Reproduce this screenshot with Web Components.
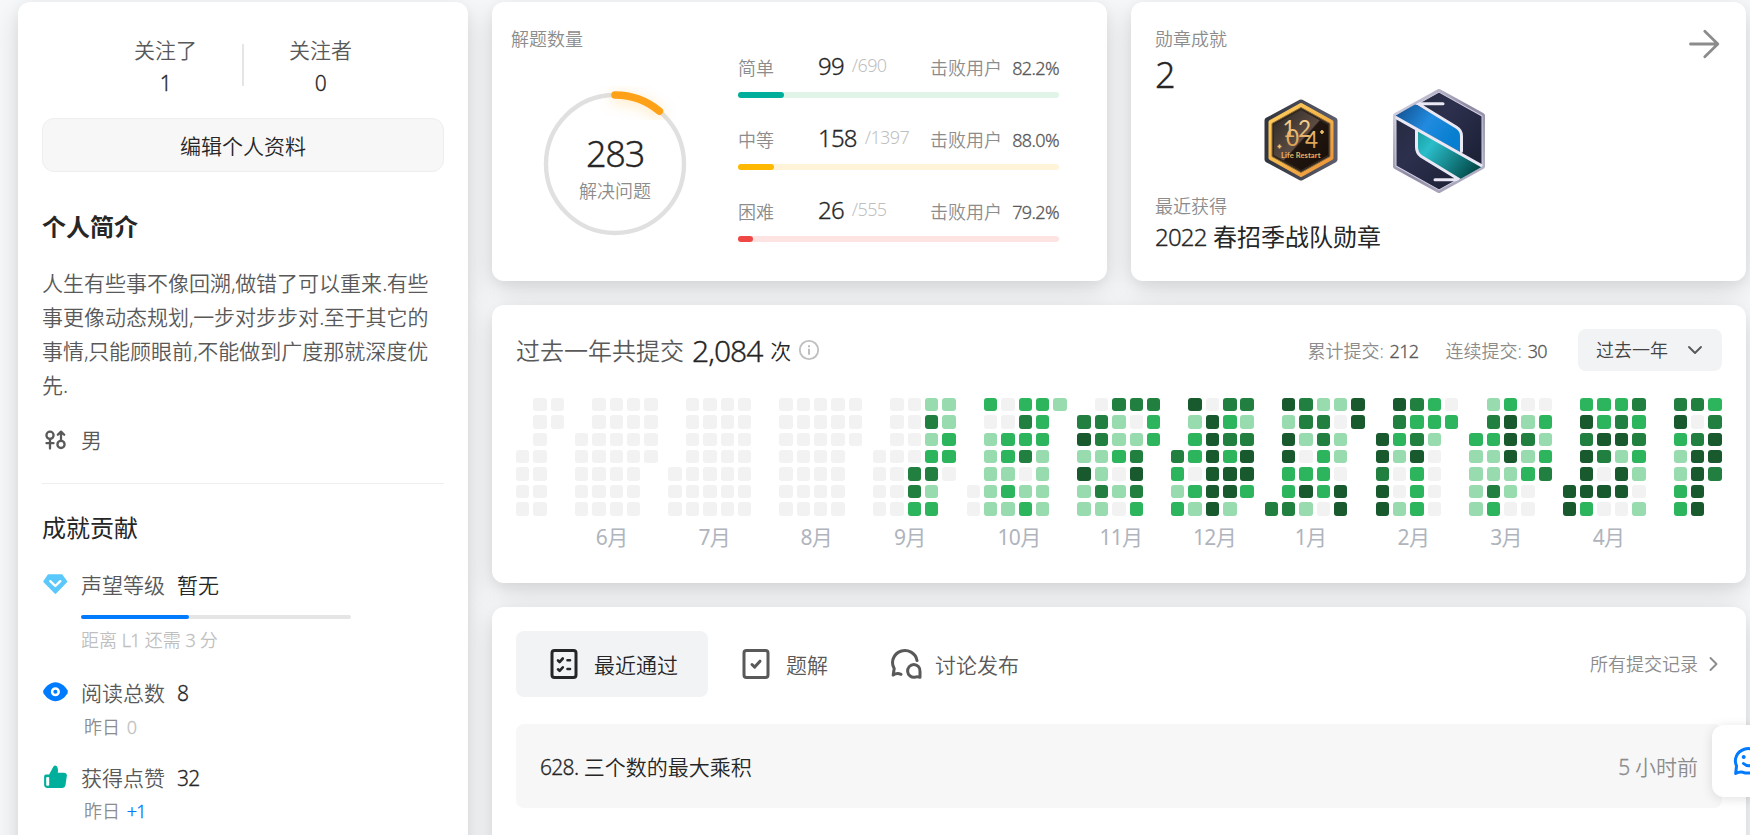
<!DOCTYPE html>
<html lang="zh-CN">
<head>
<meta charset="utf-8">
<title>个人主页</title>
<style>
html,body{margin:0;height:835px;overflow:hidden}
body{background:#f7f8fa;font-family:"Noto Sans","Noto Sans CJK SC",sans-serif;font-weight:350;color:#262626;width:1750px}
</style>
</head>
<body>
<profile-page></profile-page>
<script>
const define=(name,css,html,init)=>customElements.define(name,class extends HTMLElement{
  constructor(){
    super();
    const t=document.createElement('template');
    t.innerHTML=`<style>*{box-sizing:border-box}.n{letter-spacing:-.033em;font-weight:350;-webkit-text-stroke:.3px}svg{display:block;flex:none}${css}</style>${html}`;
    this.attachShadow({mode:'open'}).append(t.content.cloneNode(true));
  }
  connectedCallback(){ if(init) init(this,this.shadowRoot); }
});

define('surface-card',
`:host{display:block;background:#fff;border-radius:12px;box-shadow:0 9px 30px rgba(0,0,0,.13),0 4px 12px rgba(0,0,0,.05)}`,
`<slot></slot>`);

define('follow-stat',
`:host{display:block;text-align:center;font-size:21px;width:63px}
.l{line-height:34px;color:#595959}.v{line-height:32px}`,
`<div class="l"><slot></slot></div><div class="v n"><slot name="v"></slot></div>`);

define('contrib-item',
`:host{display:grid;grid-template-columns:39px 1fr;font-size:21px;line-height:34px}
.i{padding-top:var(--it,4px)}
.h{display:flex;color:#595959;line-height:32px;padding-bottom:2px}.h b{font-weight:350;color:#262626;margin-left:12px}
.s{font-size:18px;line-height:30px}`,
`<div class="i"><slot name="icon"></slot></div><div><div class="h"><slot name="label"></slot><b class="b"><slot name="value"></slot></b></div><div class="s"><slot></slot></div></div>`);

define('profile-side',
`:host{display:block;padding:31px 24px 0}
.f{display:flex;justify-content:center;gap:45px}.f i{width:2px;height:42px;background:#e5e5e5;margin-top:11px}
.btn{margin-top:19px;height:54px;border:1px solid #eee;background:#f7f7f7;border-radius:12px;text-align:center;font-size:21px;line-height:54px}
h3{margin:37px 0 0;font-size:24px;line-height:36px;font-weight:700}
p{margin:21px 0 0;font-size:21px;line-height:34px;color:#595959;white-space:nowrap}p span{letter-spacing:-.03em}
.g{display:flex;margin-top:22px;font-size:21px;line-height:33px;height:34px;color:#595959}.g svg{margin:5px 13px 0 2px}
hr{border:0;height:1px;background:#eee;margin:25px 0 0}
h4{margin:26px 0 0;font-size:24px;line-height:36px;font-weight:400}
.bar{width:270px;height:4px;border-radius:2px;background:#e5e5e5;margin-top:12px}.bar i{display:block;width:108px;height:4px;border-radius:2px;background:#007aff}
.sub{display:block;color:#bfbfbf;margin-top:6px}.y{padding-left:3px;color:#8c8c8c}.y em{font-style:normal;color:#bfbfbf;margin-left:2px}.y em.p{color:#007aff}`,
`<div class="f"><follow-stat>关注了<span slot="v">1</span></follow-stat><i></i><follow-stat>关注者<span slot="v">0</span></follow-stat></div>
<div class="btn">编辑个人资料</div>
<h3>个人简介</h3>
<p>人生有些事不像回溯<span>,</span>做错了可以重来<span>.</span>有些<br>事更像动态规划<span>,</span>一步对步步对<span>.</span>至于其它的<br>事情<span>,</span>只能顾眼前<span>,</span>不能做到广度那就深度优<br>先<span>.</span></p>
<div class="g"><svg width="24" height="24" viewBox="0 0 24 24" fill="none" stroke="#595959" stroke-width="2.300" stroke-linecap="round" stroke-linejoin="round"><circle cx="6" cy="6.300" r="3.600"/><path d="M6 10.500v9M2.500 14.200h7M17 11V3.200M13.800 5.800L17 2.600l3.200 3.200"/><circle cx="17" cy="15.400" r="3.600"/></svg>男</div>
<hr>
<h4>成就贡献</h4>
<contrib-item style="margin-top:23px;--it:5px"><svg slot="icon" width="26" height="21" viewBox="0 0 26 21"><path d="M6.500 1.200h13L24.300 7.500 13.400 18.900 2.300 7.500z" fill="#5ac8fa" stroke="#5ac8fa" stroke-width="2" stroke-linejoin="round"/><path d="M8.300 7.200l5 4.800 5-4.800" fill="none" stroke="#fff" stroke-width="2.400" stroke-linecap="round" stroke-linejoin="round"/></svg><span slot="label">声望等级</span><span slot="value">暂无</span><div class="bar"><i></i></div><span class="sub">距离 <span class="n">L1</span> 还需 <span class="n">3</span> 分</span></contrib-item>
<contrib-item style="margin-top:22px;--it:5px"><svg slot="icon" width="27" height="20" viewBox="0 0 27 20"><path d="M1.500 8.300C4 4 8.500 .3 13.500.3S23 4 25.500 8.300Q26.200 9.700 25.500 11.200C23 15.500 18.500 19.200 13.500 19.200S4 15.500 1.500 11.200Q.8 9.700 1.500 8.300z" fill="#007aff"/><circle cx="13.400" cy="9.700" r="3.300" fill="none" stroke="#fff" stroke-width="2.500"/></svg><span slot="label">阅读总数</span><span slot="value" class="n">8</span><div class="y" style="padding-top:1px">昨日 <em class="n">0</em></div></contrib-item>
<contrib-item style="margin-top:20px;--it:3px"><svg slot="icon" width="27" height="24" viewBox="0 0 27 24"><path d="M3.900 9.500h3.300L11 2.200Q12.200-.6 14.600 1 16.500 3 15.800 7.700h6.500Q25.200 8 24.900 10.600L23.400 20.500Q22.900 22.900 20.500 22.900H5.500Q2.100 22.900 2.100 19.500V11.500Q2.100 9.500 3.900 9.500z" fill="#00af9b"/><rect x="4.200" y="12" width="3" height="8.800" rx="1" fill="#fff"/></svg><span slot="label">获得点赞</span><span slot="value" class="n">32</span><div class="y">昨日 <em class="n p">+1</em></div></contrib-item>`);

define('level-row',
`:host{display:block;width:321px;height:72px;font-size:18px}
.r{display:flex;line-height:30px;height:39px;color:#8c8c8c}.l{width:80px}
.c{display:flex;width:112px}.c b{font-size:24px;line-height:26px;font-weight:350;color:#262626}.c span{line-height:25px;color:#bfbfbf;margin-left:8px;-webkit-text-stroke:0}
.p{margin-left:auto;color:#595959}
.bar{height:6px;border-radius:3px;background:var(--b)}.bar i{display:block;height:6px;border-radius:3px;background:var(--c);width:var(--w)}`,
`<div class="r"><span class="l"><slot name="l"></slot></span><span class="c"><b class="n"><slot name="c"></slot></b><span class="n"><slot name="t"></slot></span></span>击败用户<span class="p n"><slot name="p"></slot></span></div><div class="bar"><i></i></div>`);

define('solved-card',
`:host{display:grid;column-gap:52px;padding:22px 48px 0 19px;grid-template-columns:175px 321px;height:279px}
.l{font-size:18px;line-height:30px;color:#8c8c8c}
.ring{display:grid;width:160px;height:160px;margin:30px 0 0 24px;text-align:center}
.ring svg,.ring div{grid-area:1/1}.ring .v{padding-top:46px;font-size:36px;line-height:48px;color:#262626}.ring .t{font-size:18px;line-height:27px}
.rows{padding-top:29px}`,
`<div class="l"><span>解题数量</span>
<div class="ring"><svg width="160" height="160" viewBox="0 0 160 160" fill="none"><defs><filter id="g" x="-50%" y="-50%" width="200%" height="200%"><feDropShadow dx="0" dy="3" stdDeviation="7" flood-color="#ffa116" flood-opacity=".3"/></filter></defs><circle cx="80" cy="80" r="69" stroke="#e0e0e0" stroke-width="4.400"/><path d="M80 11A69 69 0 0 1 124.400 27.200" stroke="#ffa116" stroke-width="7.500" stroke-linecap="round" filter="url(#g)"/></svg><div><div class="v n">283</div><div class="t">解决问题</div></div></div></div>
<div class="rows">
<level-row style="--c:#00af9b;--b:#e0f4e7;--w:46px"><span slot="l">简单</span><span slot="c">99</span><span slot="t">/690</span><span slot="p">82.2%</span></level-row>
<level-row style="--c:#ffb800;--b:#fff4d9;--w:36px"><span slot="l">中等</span><span slot="c">158</span><span slot="t">/1397</span><span slot="p">88.0%</span></level-row>
<level-row style="--c:#ef4743;--b:#fde4e3;--w:15px"><span slot="l">困难</span><span slot="c">26</span><span slot="t">/555</span><span slot="p">79.2%</span></level-row>
</div>`);

define('medal-card',
`:host{display:block;height:279px;padding:22px 24px 0;color:#8c8c8c;font-size:18px;line-height:30px}
.top{display:flex;justify-content:space-between;height:30px;line-height:30px}.top svg{margin:4px 2px 0}
.num{font-size:36px;line-height:42px;height:35px;color:#262626}
.m{display:flex;height:104px;padding-left:109px;gap:54px;align-items:center}
.name{font-size:24px;line-height:34px;color:#262626;font-weight:400;margin-top:-1px}`,
`<div class="top"><span>勋章成就</span><svg width="32" height="32" viewBox="0 0 32 32" fill="none" stroke="#8c8c8c" stroke-width="2.800" stroke-linecap="round" stroke-linejoin="round"><path d="M2.500 16h27M16.800 3.300L29.800 16 16.800 28.700"/></svg></div>
<div class="num n">2</div>
<div class="m">
<svg style="margin-bottom:3px" width="74" height="82" viewBox="0 0 74 82"><defs>
<linearGradient id="a" x1="0" y1="0" x2="1" y2="1"><stop offset="0" stop-color="#ffce5c"/><stop offset=".5" stop-color="#f4b54a"/><stop offset="1" stop-color="#ee8f35"/></linearGradient>
<linearGradient id="b" x1="0" y1="0" x2="1" y2="1"><stop offset="0" stop-color="#2b2724"/><stop offset=".5" stop-color="#5c4c43"/><stop offset=".52" stop-color="#211710"/><stop offset="1" stop-color="#170e07"/></linearGradient>
<linearGradient id="s" x1="0" y1="0" x2="1" y2="0"><stop offset="0" stop-color="#323640"/><stop offset="1" stop-color="#5b5c6c"/></linearGradient>
<linearGradient id="t" x1="0" y1="0" x2="0" y2="1"><stop offset="0" stop-color="#fbdda0"/><stop offset="1" stop-color="#d3933e"/></linearGradient></defs>
<path d="M37 3.500L70.500 21.500V60.500L37 78.500 3.500 60.500V21.500z" fill="url(#s)" stroke="url(#s)" stroke-width="6" stroke-linejoin="round"/>
<path d="M37 6L67.500 23V59L37 76 6.500 59V23z" fill="url(#a)" stroke="url(#a)" stroke-width="4" stroke-linejoin="round"/>
<path d="M37 8.500L66 24.500V57.500L37 73.500 8 57.500V24.500z" fill="#30271f" stroke="#8a6a3c" stroke-width="1" stroke-linejoin="round"/>
<path d="M37 11L64 26V56L37 71 10 56V26z" fill="url(#b)"/>
<text x="18.500 22 34 41" y="38 47 38 49" fill="url(#t)" font-family="Lato,sans-serif" font-weight="400" font-size="22.500">1024</text>
<text x="17" y="59" font-family="Lato,sans-serif" font-size="7.500" font-weight="700" fill="#e9b565" textLength="39.500">Life Restart</text>
<path d="M58 31v4M56 33h4M15.500 45.500v4M13.500 47.500h4" stroke="#efbf6a" stroke-width="1.700"/></svg>
<svg width="94" height="106" viewBox="0 0 94 104" preserveAspectRatio="none"><defs>
<linearGradient id="d" x1="0" y1="0" x2="1" y2="1"><stop offset="0" stop-color="#22283a"/><stop offset=".4" stop-color="#2d304d"/><stop offset="1" stop-color="#151b2e"/></linearGradient>
<linearGradient id="e" x1="0" y1="0" x2="1" y2="1"><stop offset="0" stop-color="#e0deee"/><stop offset=".5" stop-color="#8c88a2"/><stop offset="1" stop-color="#bfbdd0"/></linearGradient>
<linearGradient id="f" x1="0" y1="0" x2="1" y2=".5"><stop offset="0" stop-color="#124a86"/><stop offset=".55" stop-color="#218be0"/><stop offset="1" stop-color="#077ecf"/></linearGradient>
<linearGradient id="h" x1="0" y1="0" x2="1" y2=".6"><stop offset="0" stop-color="#189c9c"/><stop offset=".3" stop-color="#2abdca"/><stop offset="1" stop-color="#034d4c"/></linearGradient><clipPath id="k"><path d="M47 3L90.500 27V77L47 101 3.500 77V27z"/></clipPath></defs>
<path d="M47 3.500L90.500 27V77L47 100.500 3.500 77V27z" fill="url(#d)" stroke="url(#e)" stroke-width="5" stroke-linejoin="round"/>
<path d="M47 4L90 27.500V76.500L47 100 4 76.500V27.500z" fill="url(#d)" stroke="#d6d3e5" stroke-width="1" stroke-linejoin="round"/>
<g clip-path="url(#k)" stroke-linejoin="round"><path d="M22 15.500L64 38Q69 41 69 46V63L3 27.500z" fill="url(#f)"/><path d="M25 40L91 77 68 90 29 67Q25 64 25 58z" fill="url(#h)"/>
<g fill="none" stroke="#e9e8f4" stroke-width="3" stroke-linecap="round"><path d="M51 15.500H26L64.500 38.500Q69.500 41.500 69.500 47V62M2 28L92 77.500M24.500 40.500V58Q24.500 64 29 67L67.500 90H43"/></g></g></svg>
</div>
<div style="margin-top:-2px">最近获得</div><div class="name"><span class="n">2022</span> 春招季战队勋章</div>`);

define('heat-month',
`:host{display:block;flex:none}
.c{display:grid;grid-template-rows:repeat(7,13.4px);grid-auto-columns:13.4px;grid-auto-flow:column;gap:3.98px}
i{border-radius:3px}.c0{background:#f2f2f2}.c1{background:#98dbae}.c2{background:#2cb55d}.c3{background:#21803f}.c4{background:#185a2e}
.m{font-size:21px;line-height:32px;color:#afb4bd;margin-top:5px;height:32px;white-space:nowrap;width:0;font-weight:400}.m .n{font-weight:400;-webkit-text-stroke:0}`,
`<div class="c"></div><div class="m"><span class="n"></span><span class="u"></span></div>`,
(el,r)=>{
  r.querySelector('.c').innerHTML=el.getAttribute('days').split(' ').join('').split('').map(d=>`<i class="${d==='.'?'':'c'+d}"></i>`).join('');
  const m=el.getAttribute('month');
  if(m){r.querySelector('.n').textContent=m;r.querySelector('.u').textContent='月';}
  r.querySelector('.m').style.paddingLeft=(el.getAttribute('pad')||0)+'px';
});

define('heat-card',
`:host{display:block;height:278px;padding:24px 24px 0}
.h{display:flex;height:42px;align-items:center;font-size:18px;color:#8c8c8c;line-height:42px}
.h .t{font-size:24px;color:#595959;padding-top:2px;font-weight:350}.h .b{font-size:30px;color:#262626;margin:2px 8px 0 8px}.h .k{font-size:21px;color:#262626;padding-top:1px}
.h .r{margin-left:auto;display:flex;gap:27px;padding-top:1px}.r b{color:#595959;font-weight:350;margin-left:1px}
.sel{margin-left:31px;width:144px;height:42px;border-radius:8px;background:#f2f3f5;color:#434343;display:flex;padding:0 18px;align-items:center}
.g{display:flex;margin-top:27px;gap:10.75px}.gap{margin-left:17.37px}`,
`<div class="h"><span class="t">过去一年共提交</span><span class="b n">2,084</span><span class="k">次</span><svg style="margin:0 0 1px 7px" width="22" height="22" viewBox="0 0 22 22" fill="none" stroke="#bfbfbf" stroke-width="1.800"><circle cx="11" cy="11" r="9.200"/><path d="M11 9.700v6M11 6.300v2" stroke-width="2"/></svg>
<div class="r"><span>累计提交: <b class="n">212</b></span><span>连续提交: <b class="n">30</b></span></div>
<div class="sel">过去一年<svg style="margin-left:19px" width="16" height="12" viewBox="0 0 16 12" fill="none" stroke="#595959" stroke-width="1.900" stroke-linecap="round" stroke-linejoin="round"><path d="M2 3l6 6 6-6"/></svg></div></div>
<div class="g">
<heat-month days="...0000 0000000 00....."></heat-month>
<heat-month month="6" pad="21" days="..00000 0000000 0000000 0000000 0000..."></heat-month>
<heat-month month="7" pad="30" days="....000 0000000 0000000 0000000 0000000"></heat-month>
<heat-month class="gap" month="8" pad="21" days="0000000 0000000 0000000 0000000 000...."></heat-month>
<heat-month month="9" pad="21" days="...0000 0000000 0000332 1312312 11220.."></heat-month>
<heat-month month="10" pad="31" days=".....00 2011111 0022121 2323012 2221111 1......"></heat-month>
<heat-month month="11" pad="22" days=".341411 0331131 3112010 3013432 322...."></heat-month>
<heat-month month="12" pad="22" days="...3212 4122021 0444444 3232441 313442."></heat-month>
<heat-month month="1" pad="30" days="......3 4144223 3310241 1332220 1011044 44....."></heat-month>
<heat-month month="2" pad="22" days="..44344 4321001 3234222 2210000 02....."></heat-month>
<heat-month month="3" pad="21" days="..21111 1321132 2444110 0131200 02123.."></heat-month>
<heat-month month="4" pad="30" days=".....44 2434442 2243040 2341440 3232101"></heat-month>
<heat-month class="gap" days="3421122 3034444 23443.."></heat-month>
</div>`);

define('tab-item',
`:host{display:flex;height:66px;align-items:center;border-radius:8px;padding:0 30px 0 33px;gap:15px;font-size:21px;color:#595959}
:host([active]){background:#f2f3f5;color:#262626}span{padding-top:2px;line-height:30px}`,
`<slot name="icon"></slot><span><slot></slot></span>`);

define('recent-card',
`:host{display:block;height:260px;padding:24px}
.t{display:flex}.all{margin-left:auto;display:flex;align-items:center;font-size:18px;line-height:66px;color:#8c8c8c;height:66px}
.row{margin-top:27px;height:84px;border-radius:8px;background:#f7f7f7;padding:0 24px;display:flex;justify-content:space-between;align-items:center;font-size:21px}.row time{color:#8c8c8c}`,
`<div class="t">
<tab-item active><svg slot="icon" width="30" height="32" viewBox="0 0 30 32" fill="none" stroke="#262626" stroke-width="3" stroke-linecap="round" stroke-linejoin="round"><rect x="3" y="2.500" width="24" height="27" rx="2.500"/><path d="M9 12.500l1.600 1.500 3.200-3.500M9 21.300l1.600 1.500 3.200-3.500M18.500 12.200h2.500M18.500 21h2.500" stroke-width="2.600"/></svg>最近通过</tab-item>
<tab-item style="padding-right:27px;padding-left:33px"><svg slot="icon" width="30" height="32" viewBox="0 0 30 32" fill="none" stroke="#595959" stroke-width="3" stroke-linecap="round" stroke-linejoin="round"><rect x="3" y="2.500" width="24" height="27" rx="2.500"/><path d="M11 16.500l2.700 2.600 5.300-5.900" stroke-width="3"/></svg>题解</tab-item>
<tab-item style="padding-left:35px;gap:13px"><svg slot="icon" width="32" height="32" viewBox="0 0 32 32" fill="none" stroke="#595959" stroke-width="3" stroke-linecap="round" stroke-linejoin="round"><path d="M27 12.500A12.300 12 0 1 0 4.200 20.500L3.200 27Q7 24.500 11 26.300"/><path d="M30 29.300V23.500A6.200 6.400 0 1 0 25 29.200Q27.500 28.200 30 29.300"/></svg>讨论发布</tab-item>
<div class="all">所有提交记录<svg style="margin:0 4px 0 11px" width="9" height="16" viewBox="0 0 9 16" fill="none" stroke="#8c8c8c" stroke-width="1.900" stroke-linecap="round" stroke-linejoin="round"><path d="M1.500 2l6 6-6 6"/></svg></div></div>
<div class="row"><span><span class="n">628.</span> 三个数的最大乘积</span><time><span class="n">5</span> 小时前</time></div>`);

define('chat-button',
`:host{position:absolute;left:1712px;top:725px;width:60px;height:72px;border-radius:12px;background:#fff;box-shadow:0 2px 12px rgba(0,0,0,.12);padding:20px 0 0 20px}`,
`<svg width="34" height="32" viewBox="0 0 34 32" fill="none" stroke="#007aff" stroke-width="3" stroke-linecap="round" stroke-linejoin="round"><path d="M3.700 28.500L4.500 20.800A12.800 12.200 0 1 1 17.500 28Q14 28.400 11 27.300 7.500 26.500 3.700 28.500z"/><path d="M11.500 18.500Q16.500 23 21.500 18.500"/><circle cx="11.700" cy="12" r="2" fill="#007aff" stroke="none"/><circle cx="21.500" cy="12" r="2" fill="#007aff" stroke="none"/></svg>`);

define('profile-page',
`:host{display:grid;grid-template-columns:450px 615px 615px;column-gap:24px;row-gap:24px;grid-template-rows:279px 278px 260px;padding:2px 4px 0 18px;height:835px;overflow:hidden;position:relative}
.a{grid-row:1/4;height:860px}.w{grid-column:2/4}`,
`<surface-card class="a"><profile-side></profile-side></surface-card>
<surface-card><solved-card></solved-card></surface-card>
<surface-card><medal-card></medal-card></surface-card>
<surface-card class="w"><heat-card></heat-card></surface-card>
<surface-card class="w"><recent-card></recent-card></surface-card>
<chat-button></chat-button>`);
</script>
</body>
</html>
